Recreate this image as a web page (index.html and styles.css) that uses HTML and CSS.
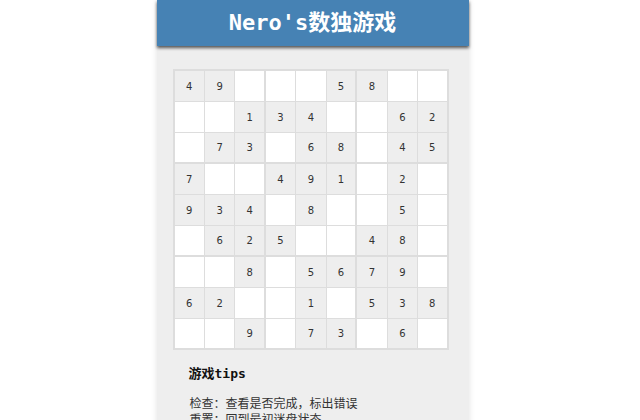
FILE: index.html
```html
<!DOCTYPE html>
<html lang="zh">
<head>
<meta charset="utf-8">
<title>Nero's数独游戏</title>
<link rel="stylesheet" href="styles.css">
</head>
<body>
<div class="app">
  <header class="header"><h1 class="title">Nero's数独游戏</h1></header>
  <div class="board">
    <div class="c g">4</div><div class="c g">9</div><div class="c"></div><div class="c"></div><div class="c"></div><div class="c g">5</div><div class="c g">8</div><div class="c"></div><div class="c"></div>
    <div class="c"></div><div class="c"></div><div class="c g">1</div><div class="c g">3</div><div class="c g">4</div><div class="c"></div><div class="c"></div><div class="c g">6</div><div class="c g">2</div>
    <div class="c"></div><div class="c g">7</div><div class="c g">3</div><div class="c"></div><div class="c g">6</div><div class="c g">8</div><div class="c"></div><div class="c g">4</div><div class="c g">5</div>
    <div class="c g">7</div><div class="c"></div><div class="c"></div><div class="c g">4</div><div class="c g">9</div><div class="c g">1</div><div class="c"></div><div class="c g">2</div><div class="c"></div>
    <div class="c g">9</div><div class="c g">3</div><div class="c g">4</div><div class="c"></div><div class="c g">8</div><div class="c"></div><div class="c"></div><div class="c g">5</div><div class="c"></div>
    <div class="c"></div><div class="c g">6</div><div class="c g">2</div><div class="c g">5</div><div class="c"></div><div class="c"></div><div class="c g">4</div><div class="c g">8</div><div class="c"></div>
    <div class="c"></div><div class="c"></div><div class="c g">8</div><div class="c"></div><div class="c g">5</div><div class="c g">6</div><div class="c g">7</div><div class="c g">9</div><div class="c"></div>
    <div class="c g">6</div><div class="c g">2</div><div class="c"></div><div class="c"></div><div class="c g">1</div><div class="c"></div><div class="c g">5</div><div class="c g">3</div><div class="c g">8</div>
    <div class="c"></div><div class="c"></div><div class="c g">9</div><div class="c"></div><div class="c g">7</div><div class="c g">3</div><div class="c"></div><div class="c g">6</div><div class="c"></div>
  </div>
  <div class="tips">
    <h2 class="tips-title">游戏tips</h2>
    <p class="tips-text">检查：查看是否完成，标出错误<br>重置：回到最初迷盘状态</p>
  </div>
</div>
</body>
</html>
```

FILE: styles.css
```css
html, body {
  margin: 0;
  padding: 0;
}
body {
  padding-right: 15px;
  background: #fff;
  font-family: "DejaVu Sans Mono", "Noto Sans CJK SC", monospace;
  height: 420px;
  overflow: hidden;
}
.app {
  width: 312px;
  margin: 0 auto;
  background: #eee;
  min-height: 420px;
  box-shadow: 0 0 6px rgba(0, 0, 0, 0.12);
}
.header {
  height: 46px;
  background: #4682b4;
  box-shadow: 0 2px 3px rgba(0, 0, 0, 0.65);
  display: flex;
  align-items: center;
  justify-content: center;
  position: relative;
}
.title {
  margin: 0;
  color: #fff;
  font-size: 22px;
  font-weight: bold;
  line-height: 1;
}
.board {
  margin: 23px 0 0 16px;
  width: 276px;
  display: grid;
  grid-template-columns: repeat(9, 1fr);
  border-left: 2px solid #ddd;
  border-top: 2px solid #ddd;
  box-sizing: border-box;
}
.c {
  box-sizing: border-box;
  height: 31px;
  border-right: 1px solid #ddd;
  border-bottom: 1px solid #ddd;
  background: #fff;
  display: flex;
  align-items: center;
  justify-content: center;
  font-family: "DejaVu Sans", sans-serif;
  font-size: 10px;
  color: #333;
}
.c.g {
  background: #eee;
}
.c:nth-child(9n+3),
.c:nth-child(9n+6),
.c:nth-child(9n) {
  border-right-width: 2px;
}
.c:nth-child(n+19):nth-child(-n+27),
.c:nth-child(n+46):nth-child(-n+54),
.c:nth-child(n+73) {
  border-bottom-width: 2px;
}
.tips {
  padding: 16px 0 0 32px;
}
.tips-title {
  margin: 0;
  font-size: 13px;
  font-weight: bold;
  color: #111;
  line-height: 16px;
}
.tips-text {
  margin: 13px 0 0 1px;
  font-family: "Noto Sans CJK TC", "Noto Sans CJK SC", sans-serif;
  font-size: 12px;
  line-height: 16px;
  color: #333;
}
```
